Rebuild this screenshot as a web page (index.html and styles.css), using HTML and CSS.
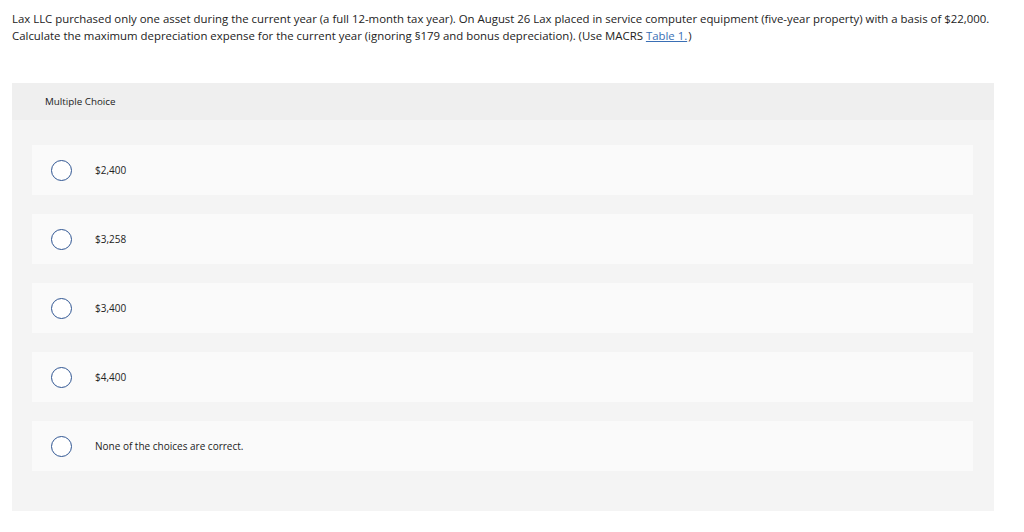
FILE: index.html
```html
<!DOCTYPE html>
<html lang="en">
<head>
  <meta charset="UTF-8">
  <meta name="viewport" content="width=device-width, initial-scale=1.0">
  <title>Multiple Choice</title>
  <link rel="stylesheet" href="styles.css">
</head>
<body>
  <div class="question">
    <p>Lax LLC purchased only one asset during the current year (a full 12-month tax year). On August 26 Lax placed in service computer equipment (five-year property) with a basis of $22,000. Calculate the maximum depreciation expense for the current year (ignoring §179 and bonus depreciation). (Use MACRS <a href="#">Table 1.</a>)</p>
  </div>

  <div class="choice-panel">
    <div class="choice-header">Multiple Choice</div>
    <div class="choice-list">
      <label class="choice"><span class="radio"></span><span class="choice-text">$2,400</span></label>
      <label class="choice"><span class="radio"></span><span class="choice-text">$3,258</span></label>
      <label class="choice"><span class="radio"></span><span class="choice-text">$3,400</span></label>
      <label class="choice"><span class="radio"></span><span class="choice-text">$4,400</span></label>
      <label class="choice"><span class="radio"></span><span class="choice-text">None of the choices are correct.</span></label>
    </div>
  </div>
</body>
</html>
```

FILE: styles.css
```css
body {
  font-family: "Open Sans", "Liberation Sans", Arial, sans-serif;
  background-color: #fff;
  color: #222;
  margin: 0;
  padding: 0;
}

.question {
  padding: 10px 12px 0 12px;
}

.question p {
  margin: 0;
  font-size: 11.4px;
  line-height: 17px;
  max-width: 995px;
}

.question a {
  color: #3a6fb5;
  text-decoration: underline;
  margin-right: 1px;
}

.choice-panel {
  margin: 39px 30px 0 12px;
  background-color: #f4f4f4;
  height: 428px;
}

.choice-header {
  background-color: #efefef;
  height: 37px;
  padding-left: 33px;
  display: flex;
  align-items: center;
  font-size: 9.8px;
}

.choice-list {
  display: flex;
  flex-direction: column;
  gap: 19px;
  padding: 25px 21px 40px 20px;
}

.choice {
  display: flex;
  align-items: center;
  height: 50px;
  background-color: #fafafa;
  padding-left: 19px;
}

.radio {
  width: 19px;
  height: 19px;
  border: 1px solid #2f5592;
  border-radius: 50%;
  background: #fff;
  margin-right: 23px;
}

.choice-text {
  font-size: 10px;
}
```
